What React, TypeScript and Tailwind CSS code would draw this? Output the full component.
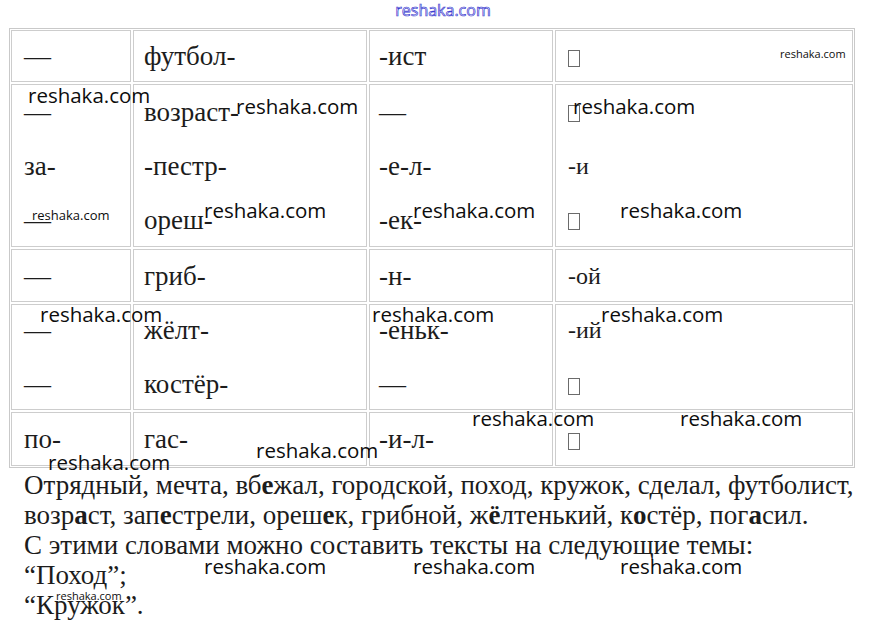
import React from 'react';

type Cell = string[];

const serif = "font-['Liberation_Serif','Times_New_Roman',serif]";
const sans = "font-['Open_Sans','Noto_Sans',sans-serif]";

// "□" is the missing-glyph box seen in the source
const BOX = '#box';

const rows: { h: string; cells: Cell[] }[] = [
  { h: 'h-[52px]', cells: [['—'], ['футбол-'], ['-ист'], [BOX]] },
  { h: 'h-[163px]', cells: [['—', 'за-', '—'], ['возраст-', '-пестр-', 'ореш-'], ['—', '-е-л-', '-ек-'], [BOX, '-и', BOX]] },
  { h: 'h-[53px]', cells: [['—'], ['гриб-'], ['-н-'], ['-ой']] },
  { h: 'h-[106px]', cells: [['—', '—'], ['жёлт-', 'костёр-'], ['-еньк-', '—'], ['-ий', BOX]] },
  { h: 'h-[54px]', cells: [['по-'], ['гас-'], ['-и-л-'], [BOX]] },
];

const colW = ['w-[120px] pl-[12px]', 'w-[234px] pl-[10px]', 'w-[184px] pl-[9px]', 'w-[298px] pl-[12px]'];

const Box = () => <span className="inline-block w-[12px] h-[17px] border border-[#6b6b6b] align-middle" />;

// watermarks lying over the page: [left, top, size]
const marks: [number, number, 'lg' | 'sm' | 'xs'][] = [
  [780, 48, 'xs'],
  [28, 85, 'lg'],
  [236, 96, 'lg'],
  [573, 96, 'lg'],
  [32, 209, 'sm'],
  [204, 200, 'lg'],
  [413, 200, 'lg'],
  [620, 200, 'lg'],
  [40, 304, 'lg'],
  [372, 304, 'lg'],
  [601, 304, 'lg'],
  [472, 408, 'lg'],
  [680, 408, 'lg'],
  [256, 440, 'lg'],
  [48, 452, 'lg'],
  [204, 556, 'lg'],
  [413, 556, 'lg'],
  [620, 556, 'lg'],
  [56, 590, 'xs'],
];

const markSize = { lg: 'text-[20.5px] font-medium', sm: 'text-[13px]', xs: 'text-[11px]' };

export default function App() {
  return (
    <div className="relative w-[882px] h-[632px] bg-white overflow-hidden text-[#1c1c1c]">
      <div className={`${sans} h-[28px] flex justify-center pl-[4px] pt-[1px] text-[16px] leading-[18px] text-transparent [-webkit-text-stroke:0.7px_#3b3bd0]`}>
        reshaka.com
      </div>

      <div className="ml-[9px] w-[846px] border border-[#c9c9c9] p-[1px] flex flex-col gap-[2px]">
        {rows.map((r, i) => (
          <div key={i} className={`flex gap-[2px] ${r.h}`}>
            {r.cells.map((c, j) => (
              <div key={j} className={`${colW[j]} border border-[#cdcdcd] flex flex-col justify-center`}>
                {c.map((t, k) => (
                  <div key={k} className={`${serif} ${j === 3 ? 'text-[24px]' : 'text-[27px]'} leading-[54px] h-[54px] shrink-0`}>
                    {t === BOX ? <Box /> : t}
                  </div>
                ))}
              </div>
            ))}
          </div>
        ))}
      </div>

      <div className={`${serif} text-[27px] leading-[30px] pl-[24px] pt-[2px] text-[#1c1c1c]`}>
        <div>
          Отрядный, мечта, вб<b>е</b>жал, городской, поход, кружок, сделал, футболист,
        </div>
        <div>
          возр<b>а</b>ст, зап<b>е</b>стрели, ореш<b>е</b>к, грибной, ж<b>ё</b>лтенький, к<b>о</b>стёр, пог<b>а</b>сил.
        </div>
        <div>С этими словами можно составить тексты на следующие темы:</div>
        <div>“Поход”;</div>
        <div>“Кружок”.</div>
      </div>

      {marks.map(([x, y, s], i) => (
        <div
          key={i}
          className={`${sans} ${markSize[s]} absolute leading-none text-[#0d0d0d] whitespace-nowrap`}
          style={{ left: x, top: y }}
        >
          reshaka.com
        </div>
      ))}
    </div>
  );
}
